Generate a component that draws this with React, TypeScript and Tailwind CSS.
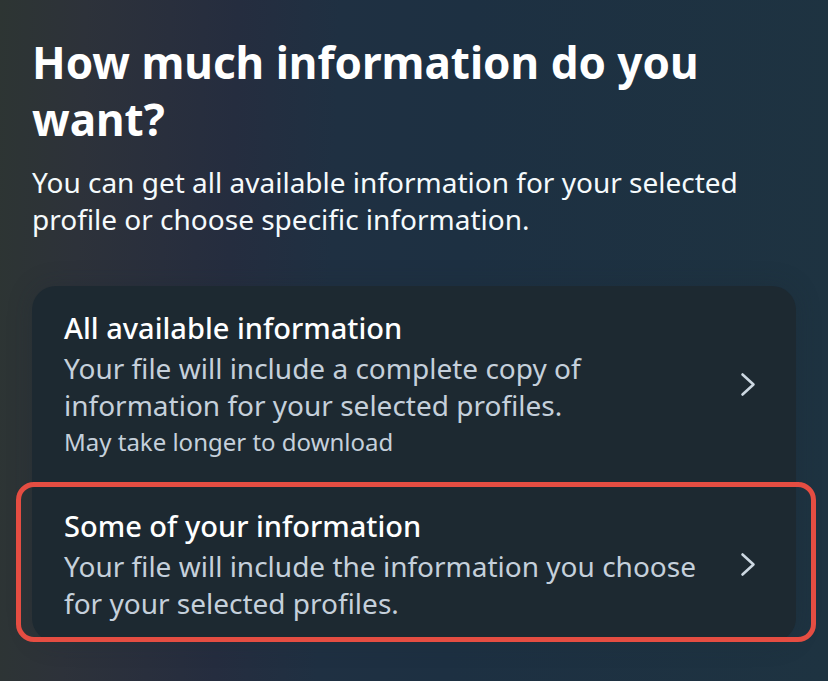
type Option = {
  title: string;
  description: string;
  note?: string;
  highlighted?: boolean;
};

const options: Option[] = [
  {
    title: "All available information",
    description:
      "Your file will include a complete copy of information for your selected profiles.",
    note: "May take longer to download",
  },
  {
    title: "Some of your information",
    description:
      "Your file will include the information you choose for your selected profiles.",
    highlighted: true,
  },
];

function Chevron() {
  return (
    <svg
      viewBox="0 0 32 32"
      className="size-8 shrink-0 text-[#cdd8e2]"
      fill="none"
      stroke="currentColor"
      strokeWidth="2.6"
      strokeLinecap="round"
      strokeLinejoin="round"
      aria-hidden="true"
    >
      <path d="M10.5 6.5 21.5 16.5 10.5 26.5" />
    </svg>
  );
}

function OptionRow({ title, description, note, highlighted }: Option) {
  return (
    <li className="group relative">
      <button
        type="button"
        className="flex w-full items-center gap-4 px-8 pt-[22px] pb-6 text-left group-last:pb-5"
      >
        <span className="flex min-w-0 flex-1 flex-col">
          <span className="mb-0.5 text-[29px] leading-10 font-medium text-white">{title}</span>
          <span className="text-[28px] leading-[37px] text-[#c5d0db]">{description}</span>
          {note && <span className="text-2xl leading-9 text-[#c5d0db]">{note}</span>}
        </span>
        <Chevron />
      </button>
      {highlighted && (
        <span className="pointer-events-none absolute -top-0.5 -right-5 bottom-0 -left-4 rounded-[18px] border-5 border-[#e54d42]" />
      )}
    </li>
  );
}

export default function App() {
  return (
    <main className="min-h-screen bg-[linear-gradient(92deg,#2d3533_0%,#2d323a_10%,#292f3d_20%,#252d3f_28%,#1f3042_40%,#1d3042_55%,#1e3341_100%)] px-8 pt-[34px] pb-8 font-['Noto_Sans','Liberation_Sans',sans-serif]">
      <h1 className="text-[44px] leading-[57px] font-bold text-white">
        How much information do you want?
      </h1>
      <p className="mt-4 text-[28px] leading-[37px] text-[#f5fafc]">
        You can get all available information for your selected profile or choose specific
        information.
      </p>
      <ul className="mt-12 rounded-3xl bg-[#1d2931] shadow-[0_0_24px_#1d293140]">
        {options.map((option) => (
          <OptionRow key={option.title} {...option} />
        ))}
      </ul>
    </main>
  );
}
